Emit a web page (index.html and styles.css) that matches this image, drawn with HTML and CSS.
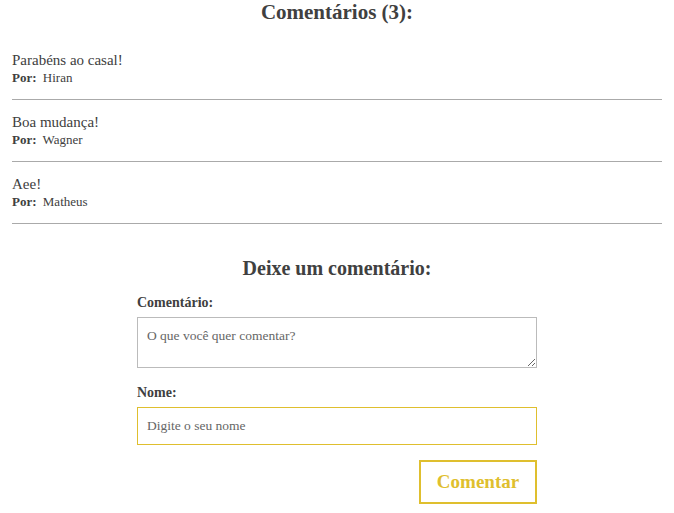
FILE: index.html
```html
<!DOCTYPE html>
<html lang="pt-BR">
<head>
<meta charset="utf-8">
<title>Comentários</title>
<link rel="stylesheet" href="styles.css">
</head>
<body>
  <section class="comments">
    <h2 class="title">Comentários (3):</h2>
    <div class="comment">
      <p class="comment-text">Parabéns ao casal!</p>
      <p class="comment-author"><strong>Por:</strong> Hiran</p>
    </div>
    <div class="comment">
      <p class="comment-text">Boa mudança!</p>
      <p class="comment-author"><strong>Por:</strong> Wagner</p>
    </div>
    <div class="comment">
      <p class="comment-text">Aee!</p>
      <p class="comment-author"><strong>Por:</strong> Matheus</p>
    </div>
  </section>
  <section class="form-section">
    <h2 class="form-title">Deixe um comentário:</h2>
    <form class="form">
      <label class="label" for="c">Comentário:</label>
      <textarea id="c" class="textarea" placeholder="O que você quer comentar?"></textarea>
      <label class="label label-name" for="n">Nome:</label>
      <input id="n" class="input input-focus" type="text" placeholder="Digite o seu nome">
      <div class="actions">
        <button type="button" class="button">Comentar</button>
      </div>
    </form>
  </section>
</body>
</html>
```
FILE: styles.css
```css
* { box-sizing: border-box; }
body {
  margin: 0;
  padding: 0 12px;
  background: #fff;
  color: #404040;
  font-family: "Liberation Serif", serif;
}
.title {
  margin: 0 0 14px;
  font-size: 21px;
  line-height: 24px;
  text-align: center;
  color: #404040;
}
.comment {
  padding: 14px 0 13px;
  border-bottom: 1px solid #aaa;
}
.comment-text {
  margin: 0;
  font-size: 15px;
  line-height: 17px;
}
.comment-author {
  margin: 0;
  font-size: 13px;
  line-height: 17px;
}
.comment-author strong { margin-right: 3px; }
.form-section {
  width: 400px;
  margin: 32px auto 0;
}
.form-title {
  margin: 0;
  font-size: 20px;
  line-height: 24px;
  text-align: center;
}
.form {
  display: flex;
  flex-direction: column;
}
.label {
  margin-top: 14px;
  font-size: 14px;
  line-height: 18px;
  font-weight: bold;
}
.label-name { margin-top: 16px; }
.textarea, .input {
  margin-top: 5px;
  width: 400px;
  border: 1px solid #bbb;
  font-family: "Liberation Serif", serif;
  font-size: 13.5px;
  color: #444;
  padding: 10px 9px;
  outline: none;
}
.textarea {
  height: 51px;
  resize: vertical;
}
.input { height: 38px; }
.input-focus { border-color: #dfbf2e; }
.textarea::placeholder, .input::placeholder { color: #666; }
.actions {
  display: flex;
  justify-content: flex-end;
  margin-top: 15px;
}
.button {
  width: 118px;
  height: 44px;
  border: 2px solid #dfbf2e;
  background: #fff;
  color: #dfbf2e;
  font-family: "Liberation Serif", serif;
  font-weight: bold;
  font-size: 19px;
}
```
